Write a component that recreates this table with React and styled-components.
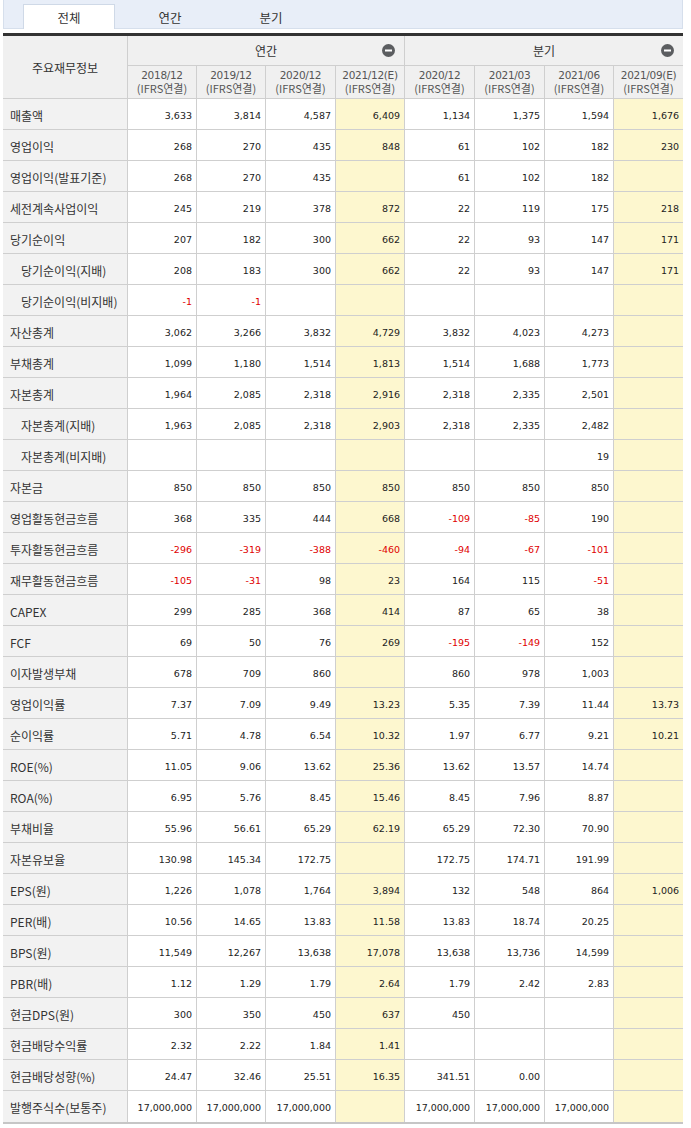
import React from "react";
import styled, { createGlobalStyle } from "styled-components";

const GlobalStyle = createGlobalStyle`
  body {
    margin: 0;
    background: #fff;
    font-family: "Noto Sans CJK KR", "DejaVu Sans", sans-serif;
  }
`;

const Wrapper = styled.div`
  width: 680px;
  padding-left: 3px;
`;

const TabBar = styled.div`
  display: flex;
  align-items: flex-end;
  gap: 9px;
  height: 28px;
  padding-left: 19px;
  background: #e8eef8;
  border: 1px solid #d6dfec;
  border-top: none;
  box-sizing: content-box;
`;

const Tab = styled.div`
  width: 92px;
  height: 25px;
  box-sizing: border-box;
  display: flex;
  align-items: center;
  justify-content: center;
  font-size: 12.5px;
  color: #333;
  margin-bottom: -1px;
  background: ${({ $active }) => ($active ? "#fff" : "transparent")};
  border: 1px solid ${({ $active }) => ($active ? "#cfd9e7" : "transparent")};
  border-bottom: none;
`;

const Table = styled.table`
  margin-top: 4px;
  width: 680px;
  table-layout: fixed;
  border-collapse: separate;
  border-spacing: 0;
  border-top: 3px solid #333;
  border-bottom: 2px solid #c6c6c6;
`;

const Col = styled.col`
  width: ${({ $w }) => $w}px;
`;

const HeadRow = styled.tr`
  height: ${({ $h }) => $h}px;
`;

const Th = styled.th`
  position: relative;
  padding: 0;
  background: #f0f0f0;
  font-weight: normal;
  color: ${({ $sub }) => ($sub ? "#555" : "#333")};
  font-size: ${({ $sub }) => ($sub ? "11px" : "12px")};
  line-height: 13px;
  text-align: center;
  border-bottom: 1px solid #cfcfcf;
  border-right: ${({ $last }) => ($last ? "none" : "1px solid #cfcfcf")};
`;

const Period = styled.div`
  font-family: Tahoma, "DejaVu Sans", sans-serif;
  font-size: 10.5px;
  letter-spacing: -0.3px;
`;

const Toggle = styled.svg`
  position: absolute;
  right: 9px;
  top: 50%;
  margin-top: -7px;
  width: 13px;
  height: 13px;
`;

const Row = styled.tr`
  height: 31px;
`;

const Label = styled.th`
  padding: 2px 0 0 ${({ $indent }) => ($indent ? 18 : 7)}px;
  background: #f2f2f2;
  font-weight: normal;
  text-align: left;
  font-size: 12px;
  color: #333;
  white-space: nowrap;
  border-right: 1px solid #cfcfcf;
  border-bottom: ${({ $end }) => ($end ? "none" : "1px solid #cfcfcf")};
`;

const Td = styled.td`
  padding: 2px 4px 0 0;
  text-align: right;
  font-family: Tahoma, "DejaVu Sans", sans-serif;
  font-size: 9.5px;
  color: ${({ $neg }) => ($neg ? "#e00000" : "#222")};
  background: ${({ $est }) => ($est ? "#fdf7cf" : "#fff")};
  white-space: nowrap;
  border-right: ${({ $last }) => ($last ? "none" : "1px solid #cfcfcf")};
  border-bottom: ${({ $end }) => ($end ? "none" : "1px solid #cfcfcf")};
`;

const widths = [125, 69, 69, 70, 69, 70, 70, 69, 69];

const periods = [
  "2018/12", "2019/12", "2020/12", "2021/12(E)",
  "2020/12", "2021/03", "2021/06", "2021/09(E)",
];

const rows = [
  ["매출액", 0, ["3,633", "3,814", "4,587", "6,409", "1,134", "1,375", "1,594", "1,676"]],
  ["영업이익", 0, ["268", "270", "435", "848", "61", "102", "182", "230"]],
  ["영업이익(발표기준)", 0, ["268", "270", "435", "", "61", "102", "182", ""]],
  ["세전계속사업이익", 0, ["245", "219", "378", "872", "22", "119", "175", "218"]],
  ["당기순이익", 0, ["207", "182", "300", "662", "22", "93", "147", "171"]],
  ["당기순이익(지배)", 1, ["208", "183", "300", "662", "22", "93", "147", "171"]],
  ["당기순이익(비지배)", 1, ["-1", "-1", "", "", "", "", "", ""]],
  ["자산총계", 0, ["3,062", "3,266", "3,832", "4,729", "3,832", "4,023", "4,273", ""]],
  ["부채총계", 0, ["1,099", "1,180", "1,514", "1,813", "1,514", "1,688", "1,773", ""]],
  ["자본총계", 0, ["1,964", "2,085", "2,318", "2,916", "2,318", "2,335", "2,501", ""]],
  ["자본총계(지배)", 1, ["1,963", "2,085", "2,318", "2,903", "2,318", "2,335", "2,482", ""]],
  ["자본총계(비지배)", 1, ["", "", "", "", "", "", "19", ""]],
  ["자본금", 0, ["850", "850", "850", "850", "850", "850", "850", ""]],
  ["영업활동현금흐름", 0, ["368", "335", "444", "668", "-109", "-85", "190", ""]],
  ["투자활동현금흐름", 0, ["-296", "-319", "-388", "-460", "-94", "-67", "-101", ""]],
  ["재무활동현금흐름", 0, ["-105", "-31", "98", "23", "164", "115", "-51", ""]],
  ["CAPEX", 0, ["299", "285", "368", "414", "87", "65", "38", ""]],
  ["FCF", 0, ["69", "50", "76", "269", "-195", "-149", "152", ""]],
  ["이자발생부채", 0, ["678", "709", "860", "", "860", "978", "1,003", ""]],
  ["영업이익률", 0, ["7.37", "7.09", "9.49", "13.23", "5.35", "7.39", "11.44", "13.73"]],
  ["순이익률", 0, ["5.71", "4.78", "6.54", "10.32", "1.97", "6.77", "9.21", "10.21"]],
  ["ROE(%)", 0, ["11.05", "9.06", "13.62", "25.36", "13.62", "13.57", "14.74", ""]],
  ["ROA(%)", 0, ["6.95", "5.76", "8.45", "15.46", "8.45", "7.96", "8.87", ""]],
  ["부채비율", 0, ["55.96", "56.61", "65.29", "62.19", "65.29", "72.30", "70.90", ""]],
  ["자본유보율", 0, ["130.98", "145.34", "172.75", "", "172.75", "174.71", "191.99", ""]],
  ["EPS(원)", 0, ["1,226", "1,078", "1,764", "3,894", "132", "548", "864", "1,006"]],
  ["PER(배)", 0, ["10.56", "14.65", "13.83", "11.58", "13.83", "18.74", "20.25", ""]],
  ["BPS(원)", 0, ["11,549", "12,267", "13,638", "17,078", "13,638", "13,736", "14,599", ""]],
  ["PBR(배)", 0, ["1.12", "1.29", "1.79", "2.64", "1.79", "2.42", "2.83", ""]],
  ["현금DPS(원)", 0, ["300", "350", "450", "637", "450", "", "", ""]],
  ["현금배당수익률", 0, ["2.32", "2.22", "1.84", "1.41", "", "", "", ""]],
  ["현금배당성향(%)", 0, ["24.47", "32.46", "25.51", "16.35", "341.51", "0.00", "", ""]],
  ["발행주식수(보통주)", 0, ["17,000,000", "17,000,000", "17,000,000", "", "17,000,000", "17,000,000", "17,000,000", ""]],
];

const MinusIcon = () => (
  <Toggle viewBox="0 0 13 13">
    <circle cx="6.5" cy="6.5" r="6.5" fill="#5b5d60" />
    <rect x="3" y="5.5" width="7" height="2" fill="#fff" />
  </Toggle>
);

const App = () => {
  return (
    <Wrapper>
      <GlobalStyle />
      <TabBar>
        <Tab $active>전체</Tab>
        <Tab>연간</Tab>
        <Tab>분기</Tab>
      </TabBar>
      <Table>
        <colgroup>
          {widths.map((w, i) => (
            <Col key={i} $w={w} />
          ))}
        </colgroup>
        <thead>
          <HeadRow $h={30}>
            <Th rowSpan={2}>주요재무정보</Th>
            <Th colSpan={4}>
              연간
              <MinusIcon />
            </Th>
            <Th colSpan={4} $last>
              분기
              <MinusIcon />
            </Th>
          </HeadRow>
          <HeadRow $h={33}>
            {periods.map((p, i) => (
              <Th key={i} $sub $last={i === periods.length - 1}>
                <Period>{p}</Period>
                <div>(IFRS연결)</div>
              </Th>
            ))}
          </HeadRow>
        </thead>
        <tbody>
          {rows.map(([label, indent, values], r) => {
            const end = r === rows.length - 1;
            return (
              <Row key={label}>
                <Label $indent={indent} $end={end}>{label}</Label>
                {values.map((v, i) => (
                  <Td
                    key={i}
                    $est={i === 3 || i === 7}
                    $neg={v.startsWith("-")}
                    $last={i === values.length - 1}
                    $end={end}
                  >
                    {v}
                  </Td>
                ))}
              </Row>
            );
          })}
        </tbody>
      </Table>
    </Wrapper>
  );
};

export default App;
